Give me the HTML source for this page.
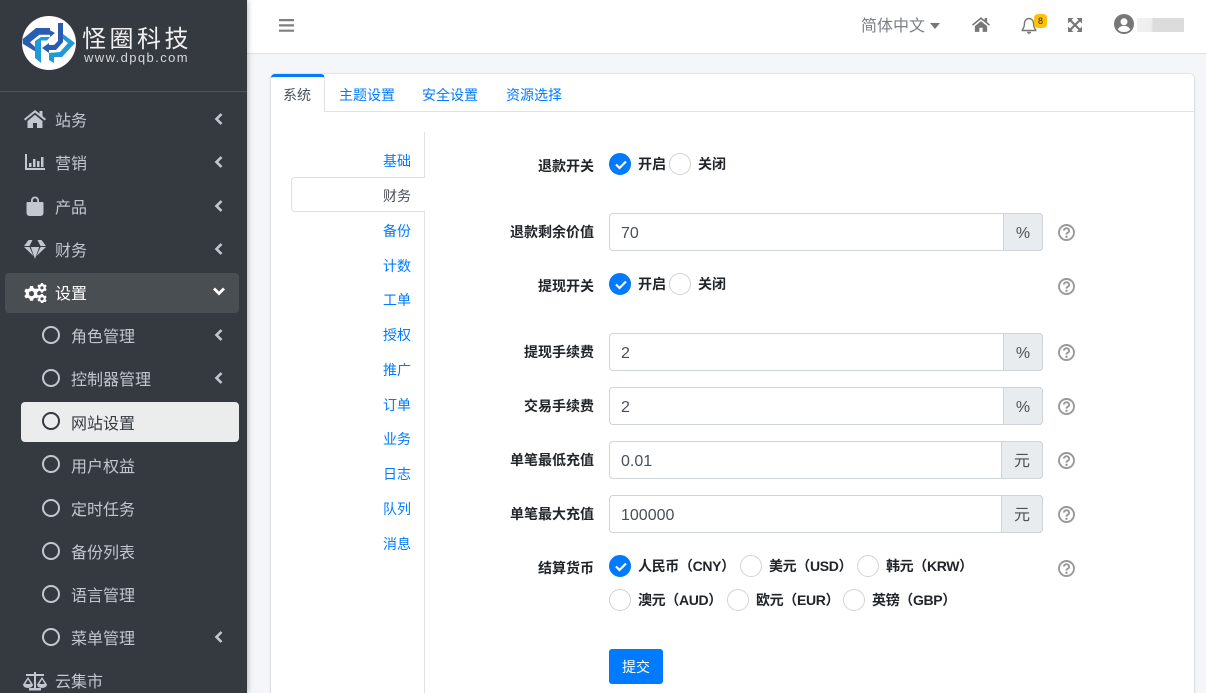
<!DOCTYPE html>
<html lang="zh-CN"><head><meta charset="utf-8"><title>网站设置</title>
<style>
*{box-sizing:border-box}
html,body{margin:0;padding:0;width:1206px;height:693px;overflow:hidden;background:#f4f6f9;font-family:"Liberation Sans","Noto Sans CJK SC",sans-serif;font-size:14px;color:#212529}
#wrap{position:absolute;left:0;top:0;width:1206px;height:693px;overflow:hidden}
.a{position:absolute;white-space:nowrap}
.t{position:absolute;white-space:nowrap;line-height:20px;margin-top:1px}
#side{position:absolute;left:0;top:0;width:247px;height:693px;background:#343a40;box-shadow:0 0 6px rgba(0,0,0,.35);overflow:hidden;z-index:3}
.m{position:absolute;left:55px;font-size:16px;line-height:22px;color:#c2c7d0;white-space:nowrap;margin-top:2px}
.s{left:71px}
.ic{position:absolute;fill:#c2c7d0}
.ch{position:absolute;left:214px;width:9px;height:12px;fill:none;stroke:#c2c7d0;stroke-width:2.6}
.ci{position:absolute;left:42px;width:18px;height:18px;border:2.5px solid #c2c7d0;border-radius:50%}
.v{position:absolute;right:795px;font-size:14px;line-height:20px;color:#007bff;white-space:nowrap;margin-top:1px}
.lab{position:absolute;right:612px;font-size:14px;font-weight:bold;line-height:20px;color:#212529;white-space:nowrap;margin-top:1px}
.inp{position:absolute;left:609px;width:434px;height:38px;border:1px solid #ced4da;border-radius:4px;background:#fff;font-size:16px;line-height:40px;padding-left:11px;color:#495057}
.ad{position:absolute;right:-1px;top:-1px;height:38px;width:40px;background:#e9ecef;border:1px solid #ced4da;border-radius:0 4px 4px 0;text-align:center;line-height:39px;font-size:16px;color:#495057}
.r{position:absolute;width:22px;height:22px;border-radius:50%;border:1px solid #d3d3d3;background:#fff}
.r.on{background:#007bff;border-color:#007bff}
.r.on svg{position:absolute;left:4px;top:5px}
.rl{position:absolute;font-size:14px;font-weight:bold;line-height:20px;color:#212529;white-space:nowrap}
.c{letter-spacing:-.35px}
.q{position:absolute;left:1058px;width:17px;height:17px}
</style></head><body><div id="wrap">

<div id="side">
<svg class="a" style="left:22px;top:16px" width="54" height="54" viewBox="0 0 54 54"><circle cx="27" cy="27" r="27" fill="#fff"/>
<path d="M13 25l6-4v26l-6-5z" fill="#1f9ad6"/>
<path d="M19 21h9l-3 3.500h-6z" fill="#1f9ad6"/>
<path d="M.7 23L14 12h14v2.300l5 2.700-5 4v-2.300H17.300L8 26.300l5 4.700v4.300L.7 27.700z" fill="#2a5cb0"/>
<path d="M41 18l12 9-13 14H27v-4l11-1 8-9-5-4z" fill="#1f9ad6"/>
<path d="M27 41h5v6l-5-3z" fill="#1f9ad6"/>
<path d="M36 7h5v19l-7 8h-7v3l-7-5 7-5v2h5l4-4z" fill="#2a5cb0"/></svg>
<div class="a" style="left:82px;top:21px;font-size:24px;line-height:32px;letter-spacing:3.500px;color:#f0f0f0;font-family:'Noto Sans CJK SC',sans-serif;font-weight:400">怪圈科技</div>
<div class="a" style="left:84px;top:50px;font-size:13px;line-height:16px;letter-spacing:1.400px;color:#d8d8d8">www.dpqb.com</div>
<div class="a" style="left:0;top:91px;width:247px;height:1px;background:#4b545c"></div>

<div class="a" style="left:5px;top:273px;width:234px;height:40px;border-radius:4px;background:#494e53"></div>
<div class="a" style="left:21px;top:402px;width:218px;height:40px;border-radius:4px;background:#ebeded"></div>

<svg class="ic" style="left:24px;top:110px" width="22" height="18" viewBox="0 0 22 18"><path d="M11 0L0 9l1.200 1.500L11 2.600l9.800 7.900L22 9l-3.500-2.900V1h-3v2.600zM3.500 11v7h5.500v-5h4v5h5.500v-7L11 4.800z"/></svg>
<svg class="ic" style="left:25px;top:154px" width="20" height="16" viewBox="0 0 20 16"><path d="M0 0h2v14h18v2H0z"/><path d="M4 9h2.500v4H4zM8 5h2.500v8H8zM12 7h2.500v6H12zM16 3h2.500v10H16z"/></svg>
<svg class="ic" style="left:26px;top:196px" width="18" height="20" viewBox="0 0 18 20"><path d="M5 6V4.500a4 4 0 0 1 8 0V6h3.500a1 1 0 0 1 1 1v10a3 3 0 0 1-3 3h-11a3 3 0 0 1-3-3V7a1 1 0 0 1 1-1zm1.800 0h4.400V4.500a2.200 2.200 0 0 0-4.400 0z"/></svg>
<svg class="ic" style="left:24px;top:240px" width="22" height="19" viewBox="0 0 22 19"><path d="M4.500 0h13L22 6h-5.500L13.500 0h-5L5.500 6H0zM0 7h5.500l4 9zM6.800 7h8.400L11 19zM16.500 7H22l-9.500 9z"/></svg>
<svg class="ic" style="left:23px;top:283px;fill:#fff" width="24" height="20" viewBox="0 0 24 20"><path fill-rule="evenodd" d="M7 3h3l.5 2 1.700 1 2-.6 1.500 2.600-1.500 1.400v2l1.500 1.400-1.500 2.600-2-.6-1.700 1-.5 2H7l-.5-2-1.700-1-2 .6L1.300 13l1.500-1.400v-2L1.300 8.200l1.500-2.600 2 .6 1.700-1zm1.500 5a2.600 2.600 0 1 0 0 5.200 2.600 2.600 0 0 0 0-5.200z"/><path fill-rule="evenodd" d="M18 0h2l.4 1.200 1.200.7 1.200-.3.800 1.600-.9.900v1.400l.9.900-.8 1.600-1.200-.3-1.200.7L20 9.600h-2l-.4-1.200-1.200-.7-1.200.3-.8-1.600.9-.9V4.100l-.9-.9.8-1.600 1.200.3 1.200-.7zm1 3.200a1.600 1.600 0 1 0 0 3.200 1.600 1.600 0 0 0 0-3.200zM18 11h2l.4 1.200 1.200.7 1.200-.3.800 1.600-.9.900v1.400l.9.900-.8 1.600-1.200-.3-1.200.7L20 20h-2l-.4-1.200-1.200-.7-1.200.3-.8-1.600.9-.9v-1.400l-.9-.9.8-1.600 1.200.3 1.200-.7zm1 3.200a1.600 1.600 0 1 0 0 3.200 1.600 1.600 0 0 0 0-3.200z"/></svg>
<svg class="ic" style="left:23px;top:671px" width="24" height="20" viewBox="0 0 24 20"><path d="M11 1h2v2h8v2h-8v12h5v2.500H6V17h5V5H3V3h8z"/><path d="M5 6L0 13.500a5 3.500 0 0 0 10 0zm0 2.500l2.700 4.500H2.300zM19 6l-5 7.500a5 3.500 0 0 0 10 0zm0 2.500l2.700 4.500h-5.400z"/></svg>

<div class="m" style="top:109px">站务</div>
<div class="m" style="top:152px">营销</div>
<div class="m" style="top:196px">产品</div>
<div class="m" style="top:239px">财务</div>
<div class="m" style="top:282px;color:#fff">设置</div>
<div class="m s" style="top:325px">角色管理</div>
<div class="m s" style="top:368px">控制器管理</div>
<div class="m s" style="top:412px;color:#343a40">网站设置</div>
<div class="m s" style="top:455px">用户权益</div>
<div class="m s" style="top:498px">定时任务</div>
<div class="m s" style="top:541px">备份列表</div>
<div class="m s" style="top:584px">语言管理</div>
<div class="m s" style="top:627px">菜单管理</div>
<div class="m" style="top:670px">云集市</div>

<div class="ci" style="top:326px"></div>
<div class="ci" style="top:369px"></div>
<div class="ci" style="top:412px;border-color:#343a40"></div>
<div class="ci" style="top:455px"></div>
<div class="ci" style="top:499px"></div>
<div class="ci" style="top:542px"></div>
<div class="ci" style="top:585px"></div>
<div class="ci" style="top:628px"></div>

<svg class="ch" style="top:113px" viewBox="0 0 9 12"><path d="M7.500 1L2.500 6l5 5"/></svg>
<svg class="ch" style="top:156px" viewBox="0 0 9 12"><path d="M7.500 1L2.500 6l5 5"/></svg>
<svg class="ch" style="top:200px" viewBox="0 0 9 12"><path d="M7.500 1L2.500 6l5 5"/></svg>
<svg class="ch" style="top:243px" viewBox="0 0 9 12"><path d="M7.500 1L2.500 6l5 5"/></svg>
<svg class="ch" style="top:329px" viewBox="0 0 9 12"><path d="M7.500 1L2.500 6l5 5"/></svg>
<svg class="ch" style="top:372px" viewBox="0 0 9 12"><path d="M7.500 1L2.500 6l5 5"/></svg>
<svg class="ch" style="top:631px" viewBox="0 0 9 12"><path d="M7.500 1L2.500 6l5 5"/></svg>
<svg class="a" style="left:213px;top:287px" width="12" height="9" viewBox="0 0 12 9"><path d="M1 1.500l5 5 5-5" fill="none" stroke="#fff" stroke-width="2.800"/></svg>
</div>

<!-- top nav -->
<div class="a" style="left:247px;top:0;width:959px;height:54px;background:#fff;border-bottom:1px solid #dee2e6"></div>
<svg class="a" style="left:279px;top:19px" width="15" height="13" viewBox="0 0 15 13"><path d="M0 0h15v2.200H0zM0 5.300h15v2.200H0zM0 10.600h15v2.200H0z" fill="#7f7f7f"/></svg>
<div class="a" style="left:861px;top:16px;font-size:16px;line-height:22px;color:#7a7f85">简体中文</div>
<svg class="a" style="left:930px;top:23px" width="10" height="6" viewBox="0 0 10 6"><path d="M0 0h10L5 6z" fill="#777"/></svg>
<svg class="a" style="left:972px;top:17px" width="18" height="15" viewBox="0 0 22 18"><path d="M11 0L0 9l1.200 1.500L11 2.600l9.800 7.900L22 9l-3.500-2.900V1h-3v2.600zM3.500 11v7h5.500v-5h4v5h5.500v-7L11 4.800z" fill="#777"/></svg>
<svg class="a" style="left:1021px;top:17px" width="16" height="17" viewBox="0 0 16 17"><path d="M8 1.500a4.500 4.500 0 0 0-4.500 4.500c0 4-1 5.500-2.200 6.800v.7h13.400v-.7C13.500 11.500 12.500 10 12.500 6A4.500 4.500 0 0 0 8 1.500z" fill="none" stroke="#777" stroke-width="1.400"/><path d="M6 14.800a2 2 0 0 0 4 0z" fill="#777"/></svg>
<div class="a" style="left:1034px;top:14px;width:13px;height:14px;border-radius:4px;background:#ffc107;font-size:9px;line-height:14px;text-align:center;color:#212529">8</div>
<svg class="a" style="left:1068px;top:18px" width="14" height="14" viewBox="0 0 14 14"><path d="M0 0h5.500L0 5.500zM14 0v5.500L8.500 0zM0 14V8.500L5.500 14zM14 14H8.500L14 8.500z" fill="#777"/><path d="M2 2l10 10M12 2L2 12" stroke="#777" stroke-width="2.200" fill="none"/></svg>
<svg class="a" style="left:1114px;top:14px" width="20" height="20" viewBox="0 0 20 20"><circle cx="10" cy="10" r="10" fill="#777"/><circle cx="10" cy="7.800" r="3.500" fill="#fff"/><path d="M3.800 15.500c1-2.600 3.400-3.600 6.200-3.600s5.200 1 6.200 3.600A8 8 0 0 1 10 18a8 8 0 0 1-6.200-2.500z" fill="#fff"/></svg>
<div class="a" style="left:1137px;top:18px;width:47px;height:14px;background:linear-gradient(90deg,#f1f1f1 0,#eee 30%,#dcdcdc 35%,#dcdcdc 100%)"></div>

<!-- card -->
<div class="a" style="left:271px;top:74px;width:923px;height:640px;background:#fff;border-radius:4px;box-shadow:0 0 1px rgba(0,0,0,.3),0 1px 3px rgba(0,0,0,.12)"></div>
<div class="a" style="left:271px;top:111px;width:923px;height:1px;background:#dee2e6"></div>
<div class="a" style="left:271px;top:74px;width:54px;height:38px;background:#fff;border-top:3px solid #007bff;border-right:1px solid #dee2e6;border-radius:4px 4px 0 0"></div>
<div class="t" style="left:283px;top:84px;font-size:14px;color:#495057">系统</div>
<div class="t" style="left:339px;top:84px;font-size:14px;color:#007bff">主题设置</div>
<div class="t" style="left:422px;top:84px;font-size:14px;color:#007bff">安全设置</div>
<div class="t" style="left:506px;top:84px;font-size:14px;color:#007bff">资源选择</div>

<!-- vertical tabs -->
<div class="a" style="left:424px;top:132px;width:1px;height:561px;background:#dee2e6"></div>
<div class="a" style="left:291px;top:177px;width:134px;height:35px;background:#fff;border:1px solid #dee2e6;border-right:0;border-radius:4px 0 0 4px"></div>
<div class="v" style="top:150px">基础</div>
<div class="v" style="top:185px;color:#495057">财务</div>
<div class="v" style="top:220px">备份</div>
<div class="v" style="top:255px">计数</div>
<div class="v" style="top:289px">工单</div>
<div class="v" style="top:324px">授权</div>
<div class="v" style="top:359px">推广</div>
<div class="v" style="top:394px">订单</div>
<div class="v" style="top:428px">业务</div>
<div class="v" style="top:463px">日志</div>
<div class="v" style="top:498px">队列</div>
<div class="v" style="top:533px">消息</div>

<!-- form -->
<div class="lab" style="top:155px">退款开关</div>
<div class="r on" style="left:609px;top:153px"><svg width="14" height="11" viewBox="0 0 14 11"><path d="M2 5.500l3.500 3.500L12 2.500" fill="none" stroke="#fff" stroke-width="2.200"/></svg></div>
<div class="rl" style="left:638px;top:154px">开启</div>
<div class="r" style="left:669px;top:153px"></div>
<div class="rl" style="left:698px;top:154px">关闭</div>

<div class="lab" style="top:221px">退款剩余价值</div>
<div class="inp" style="top:213px">70<div class="ad">%</div></div>

<div class="lab" style="top:275px">提现开关</div>
<div class="r on" style="left:609px;top:273px"><svg width="14" height="11" viewBox="0 0 14 11"><path d="M2 5.500l3.500 3.500L12 2.500" fill="none" stroke="#fff" stroke-width="2.200"/></svg></div>
<div class="rl" style="left:638px;top:274px">开启</div>
<div class="r" style="left:669px;top:273px"></div>
<div class="rl" style="left:698px;top:274px">关闭</div>

<div class="lab" style="top:341px">提现手续费</div>
<div class="inp" style="top:333px">2<div class="ad">%</div></div>
<div class="lab" style="top:395px">交易手续费</div>
<div class="inp" style="top:387px">2<div class="ad">%</div></div>
<div class="lab" style="top:449px">单笔最低充值</div>
<div class="inp" style="top:441px">0.01<div class="ad" style="width:42px">元</div></div>
<div class="lab" style="top:503px">单笔最大充值</div>
<div class="inp" style="top:495px">100000<div class="ad" style="width:42px">元</div></div>

<div class="lab" style="top:557px">结算货币</div>
<div class="r on" style="left:609px;top:555px"><svg width="14" height="11" viewBox="0 0 14 11"><path d="M2 5.500l3.500 3.500L12 2.500" fill="none" stroke="#fff" stroke-width="2.200"/></svg></div>
<div class="rl c" style="left:638px;top:556px">人民币（CNY）</div>
<div class="r" style="left:740px;top:555px"></div>
<div class="rl c" style="left:769px;top:556px">美元（USD）</div>
<div class="r" style="left:857px;top:555px"></div>
<div class="rl c" style="left:886px;top:556px">韩元（KRW）</div>
<div class="r" style="left:609px;top:589px"></div>
<div class="rl c" style="left:638px;top:590px">澳元（AUD）</div>
<div class="r" style="left:727px;top:589px"></div>
<div class="rl c" style="left:756px;top:590px">欧元（EUR）</div>
<div class="r" style="left:843px;top:589px"></div>
<div class="rl c" style="left:872px;top:590px">英镑（GBP）</div>

<div class="a" style="left:609px;top:649px;width:54px;height:35px;background:#007bff;border-radius:3px;color:#fff;font-size:14px;line-height:36px;text-align:center">提交</div>

<svg class="q" style="top:224px" viewBox="0 0 17 17"><circle cx="8.500" cy="8.500" r="7.500" fill="none" stroke="#999" stroke-width="1.900"/><path d="M5.900 6.600a2.600 2.400 0 1 1 3.900 2.100c-.9.500-1.300 1-1.300 1.900" fill="none" stroke="#999" stroke-width="1.900"/><circle cx="8.500" cy="12.800" r="1.200" fill="#999"/></svg>
<svg class="q" style="top:278px" viewBox="0 0 17 17"><circle cx="8.500" cy="8.500" r="7.500" fill="none" stroke="#999" stroke-width="1.900"/><path d="M5.900 6.600a2.600 2.400 0 1 1 3.900 2.100c-.9.500-1.300 1-1.300 1.900" fill="none" stroke="#999" stroke-width="1.900"/><circle cx="8.500" cy="12.800" r="1.200" fill="#999"/></svg>
<svg class="q" style="top:344px" viewBox="0 0 17 17"><circle cx="8.500" cy="8.500" r="7.500" fill="none" stroke="#999" stroke-width="1.900"/><path d="M5.900 6.600a2.600 2.400 0 1 1 3.900 2.100c-.9.500-1.300 1-1.300 1.900" fill="none" stroke="#999" stroke-width="1.900"/><circle cx="8.500" cy="12.800" r="1.200" fill="#999"/></svg>
<svg class="q" style="top:398px" viewBox="0 0 17 17"><circle cx="8.500" cy="8.500" r="7.500" fill="none" stroke="#999" stroke-width="1.900"/><path d="M5.900 6.600a2.600 2.400 0 1 1 3.900 2.100c-.9.500-1.300 1-1.300 1.900" fill="none" stroke="#999" stroke-width="1.900"/><circle cx="8.500" cy="12.800" r="1.200" fill="#999"/></svg>
<svg class="q" style="top:452px" viewBox="0 0 17 17"><circle cx="8.500" cy="8.500" r="7.500" fill="none" stroke="#999" stroke-width="1.900"/><path d="M5.900 6.600a2.600 2.400 0 1 1 3.900 2.100c-.9.500-1.300 1-1.300 1.900" fill="none" stroke="#999" stroke-width="1.900"/><circle cx="8.500" cy="12.800" r="1.200" fill="#999"/></svg>
<svg class="q" style="top:506px" viewBox="0 0 17 17"><circle cx="8.500" cy="8.500" r="7.500" fill="none" stroke="#999" stroke-width="1.900"/><path d="M5.900 6.600a2.600 2.400 0 1 1 3.900 2.100c-.9.500-1.300 1-1.300 1.900" fill="none" stroke="#999" stroke-width="1.900"/><circle cx="8.500" cy="12.800" r="1.200" fill="#999"/></svg>
<svg class="q" style="top:560px" viewBox="0 0 17 17"><circle cx="8.500" cy="8.500" r="7.500" fill="none" stroke="#999" stroke-width="1.900"/><path d="M5.900 6.600a2.600 2.400 0 1 1 3.900 2.100c-.9.500-1.300 1-1.300 1.900" fill="none" stroke="#999" stroke-width="1.900"/><circle cx="8.500" cy="12.800" r="1.200" fill="#999"/></svg>
</div></body></html>
